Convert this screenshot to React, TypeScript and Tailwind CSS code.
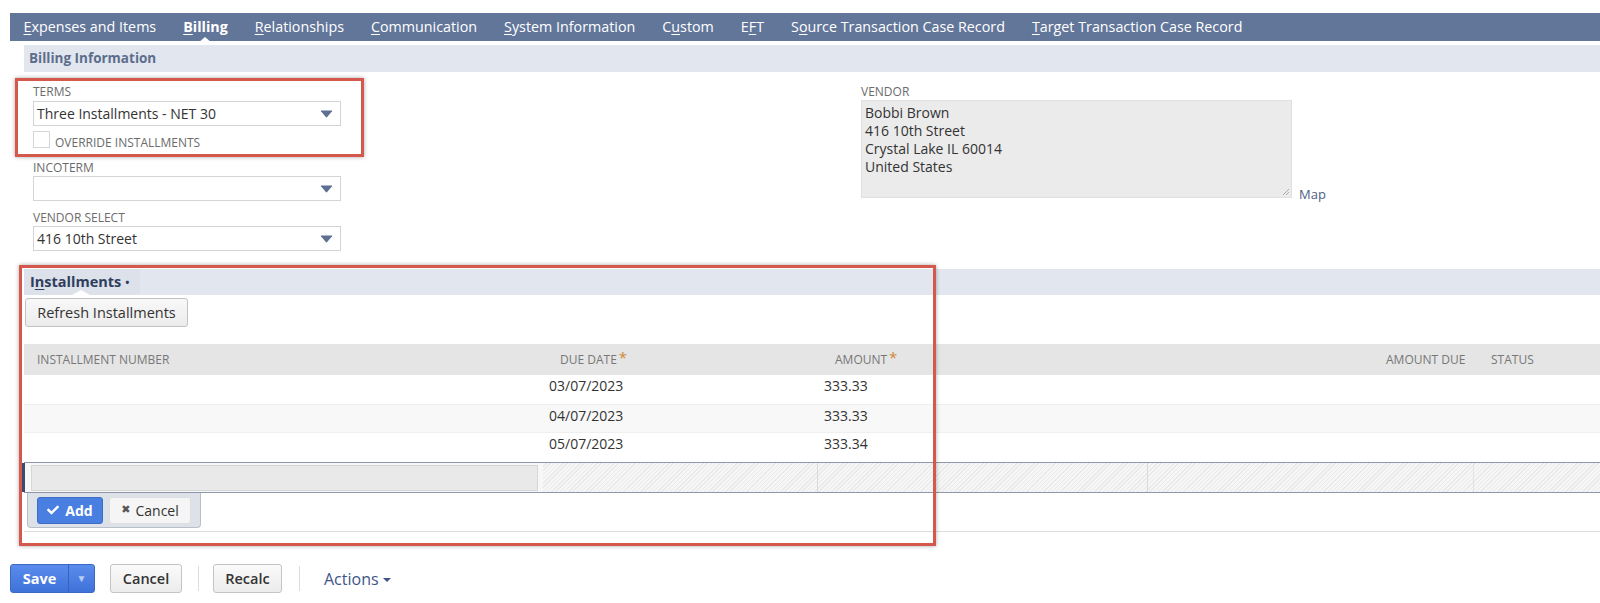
import { FaCheck } from "react-icons/fa";

const tabs = [
  { pre: "", u: "E", post: "xpenses and Items" },
  { pre: "", u: "B", post: "illing", active: true },
  { pre: "", u: "R", post: "elationships" },
  { pre: "", u: "C", post: "ommunication" },
  { pre: "", u: "S", post: "ystem Information" },
  { pre: "C", u: "u", post: "stom" },
  { pre: "E", u: "F", post: "T" },
  { pre: "S", u: "o", post: "urce Transaction Case Record" },
  { pre: "", u: "T", post: "arget Transaction Case Record" },
];

const rows = [
  { date: "03/07/2023", amount: "333.33" },
  { date: "04/07/2023", amount: "333.33" },
  { date: "05/07/2023", amount: "333.34" },
];

function Caret() {
  return (
    <svg width="13" height="8" viewBox="0 0 13 8" className="shrink-0">
      <path d="M1 1.2 Q0.6 0.5 1.5 0.5 L11.5 0.5 Q12.4 0.5 12 1.2 L7.2 7 Q6.5 7.8 5.8 7 Z" fill="#5d6f92" />
    </svg>
  );
}

function Select({ value }: { value?: string }) {
  return (
    <div className="h-[25px] w-[308px] border border-[#d4d4d4] bg-white flex items-center justify-between pl-[3px] pr-[7px] text-[14px] text-[#333]">
      <span>{value}</span>
      <Caret />
    </div>
  );
}

function Label({ children }: { children: string }) {
  return (
    <div className="h-[16px] text-[12px] leading-[16px] text-[#6b6b6b] uppercase">
      {children}
    </div>
  );
}

function Star() {
  return <span className="ml-[2px] text-[15px] leading-none text-[#d0893a] relative -top-[2px]">*</span>;
}

export default function App() {
  return (
    <div className="relative w-[1600px] h-[603px] bg-white overflow-hidden font-['Open_Sans',sans-serif] text-[#333]">
      {/* tab bar */}
      <div className="mt-[13px] ml-[10px] h-[28px] bg-[#62769a] flex items-center relative">
        {tabs.map((t, i) => (
          <div
            key={i}
            className={`relative px-[13.5px] text-[14.3px] text-white ${t.active ? "font-bold" : ""}`}
          >
            {t.pre}
            <span className="underline underline-offset-2">{t.u}</span>
            {t.post}
            {t.active && (
              <span className="absolute left-1/2 -translate-x-1/2 top-[21px] w-0 h-0 border-x-[7px] border-x-transparent border-b-[6px] border-b-white" />
            )}
          </div>
        ))}
      </div>

      {/* Billing information header */}
      <div className="mt-[4px] ml-[24px] h-[27px] bg-[#e1e6ef] flex items-center pl-[5px] text-[13.5px] font-bold text-[#5d6d8c]">
        Billing Information
      </div>

      {/* form fields */}
      <div className="flex pt-[12px]">
        <div className="ml-[33px] w-[308px]">
          <Label>Terms</Label>
          <div className="mt-[1px]">
            <Select value="Three Installments - NET 30" />
          </div>
          <div className="mt-[5px] flex items-center h-[17px]">
            <div className="w-[17px] h-[17px] border border-[#d6d6d6] bg-white" />
            <span className="ml-[5px] mt-[6px] text-[12px] text-[#6b6b6b] uppercase">Override Installments</span>
          </div>
          <div className="mt-[12px]">
            <Label>Incoterm</Label>
          </div>
          <Select />
          <div className="mt-[9px]">
            <Label>Vendor Select</Label>
          </div>
          <Select value="416 10th Street" />
        </div>

        <div className="ml-[520px]">
          <Label>Vendor</Label>
          <div className="flex items-end">
            <div className="relative w-[431px] h-[98px] bg-[#ebebeb] border border-[#e0e0e0] pt-[3px] pl-[3px] text-[14px] leading-[18px] text-[#333]">
              <div>Bobbi Brown</div>
              <div>416 10th Street</div>
              <div>Crystal Lake IL 60014</div>
              <div>United States</div>
              <svg width="8" height="8" viewBox="0 0 8 8" className="absolute right-[1px] bottom-[1px]">
                <path d="M7 1 L1 7 M7 4 L4 7" stroke="#9a9a9a" strokeWidth="0.8" />
              </svg>
            </div>
            <span className="ml-[7px] mb-[-6px] text-[13px] text-[#4d5f85]">Map</span>
          </div>
        </div>
      </div>

      {/* installments */}
      <div className="mt-[18px] ml-[24px]">
        <div className="h-[26px] bg-[#e1e6ef] flex">
          <div className="relative w-[116px] bg-[#dce1ea] flex items-center pl-[6px] text-[14.5px] font-bold text-[#2f3e5e]">
            I<span className="underline underline-offset-2">n</span>stallments
            <span className="ml-[4px] text-[11px]">•</span>
            <span className="absolute left-[48px] bottom-0 w-0 h-0 border-x-[9px] border-x-transparent border-b-[5px] border-b-white" />
          </div>
        </div>

        <div className="mt-[3px] ml-[1px] w-[163px] h-[29px] rounded-[3px] border border-[#c2c2c2] bg-[linear-gradient(#f8f8f8,#ececec)] flex items-center justify-center text-[14.5px] text-[#333]">
          Refresh Installments
        </div>

        {/* table header */}
        <div className="mt-[17px] h-[31px] bg-[#e5e5e5] grid grid-cols-[529px_275px_552px_104px_1fr] items-center text-[12px] text-[#777] uppercase">
          <div className="pl-[13px]">Installment Number</div>
          <div className="pl-[7px] flex items-center">Due Date<Star /></div>
          <div className="pl-[7px] flex items-center">Amount<Star /></div>
          <div className="pl-[6px]">Amount Due</div>
          <div className="pl-[7px]">Status</div>
        </div>

        {rows.map((r, i) => (
          <div
            key={i}
            className={`h-[29px] grid grid-cols-[519px_275px_330px_326px_1fr] items-center pb-[9px] text-[14px] text-[#333] ${i === 1 ? "bg-[#f8f8f8] border-y border-[#efefef]" : "bg-white"}`}
          >
            <div />
            <div className="pl-[6px]">{r.date}</div>
            <div className="pl-[6px]">{r.amount}</div>
            <div />
            <div />
          </div>
        ))}

        {/* edit row */}
        <div className="h-[31px] grid grid-cols-[519px_275px_330px_326px_1fr] border-y border-[#8e97ab] bg-[image:repeating-linear-gradient(-45deg,#e9e9e9_0px,#e9e9e9_1px,#f6f6f6_1px,#f6f6f6_3px)]">
          <div className="bg-[#f7f7f7] border-l-[3px] border-l-[#3c4b6c] -ml-[2px] pl-[6px] flex items-center">
            <div className="w-[507px] h-[26px] bg-[#e9e9e9] border border-[#d6d6d6]" />
          </div>
          <div className="border-r border-[#dadada]" />
          <div className="border-r border-[#dadada]" />
          <div className="border-r border-[#e2e2e2]" />
          <div />
        </div>

        <div className="h-[39px] border-b border-[#dedede]">
          <div className="ml-[3px] w-[174px] h-[35px] bg-[#dde1e8] border border-[#b9bfca] border-t-0 rounded-b-[4px] flex items-center pl-[9px] gap-[6px]">
            <div className="w-[66px] h-[27px] rounded-[3px] bg-[#4a7fe2] border border-[#3d6dc9] flex items-center justify-center gap-[6px] text-[14px] font-bold text-white">
              <FaCheck className="w-[12px] h-[12px]" />
              Add
            </div>
            <div className="w-[82px] h-[27px] rounded-[3px] bg-[#f5f5f5] border border-[#dedede] flex items-center justify-center gap-[5px] text-[14px] text-[#333]">
              <span className="font-['DejaVu_Sans',sans-serif] text-[11px] text-[#555]">✖</span>
              Cancel
            </div>
          </div>
        </div>
      </div>

      {/* footer buttons */}
      <div className="mt-[32px] ml-[10px] flex items-center h-[29px]">
        <div className="w-[85px] h-[29px] rounded-[3px] bg-[linear-gradient(#5a8ced,#3f72d8)] border border-[#3a68c3] flex text-white">
          <div className="w-[57px] flex items-center justify-center text-[14.5px] font-bold">Save</div>
          <div className="flex-1 border-l border-[#3462bd] flex items-center justify-center text-[10px] text-[#b8ccf3]">▼</div>
        </div>
        <div className="ml-[15px] w-[72px] h-[29px] rounded-[3px] bg-[linear-gradient(#fafafa,#ececec)] border border-[#c4c4c4] flex items-center justify-center text-[14.5px] font-semibold text-[#333]">
          Cancel
        </div>
        <div className="ml-[16px] w-px h-[25px] bg-[#dcdcdc]" />
        <div className="ml-[14px] w-[69px] h-[29px] rounded-[3px] bg-[linear-gradient(#fafafa,#ececec)] border border-[#c4c4c4] flex items-center justify-center text-[14.5px] font-semibold text-[#333]">
          Recalc
        </div>
        <div className="ml-[17px] w-px h-[25px] bg-[#dcdcdc]" />
        <div className="ml-[24px] flex items-center gap-[4px] text-[16px] text-[#3d5588]">
          Actions
          <span className="w-0 h-0 border-x-[4px] border-x-transparent border-t-[4px] border-t-[#3d5588] mt-[2px]" />
        </div>
      </div>

      {/* annotation boxes */}
      <div className="absolute left-[15px] top-[78px] w-[349px] h-[79px] border-[3px] border-[#d5584c] shadow-[0_0_4px_rgba(0,0,0,0.35)]" />
      <div className="absolute left-[19px] top-[265px] w-[917px] h-[281px] border-[3px] border-[#d5584c] shadow-[0_0_4px_rgba(0,0,0,0.35)]" />
    </div>
  );
}
